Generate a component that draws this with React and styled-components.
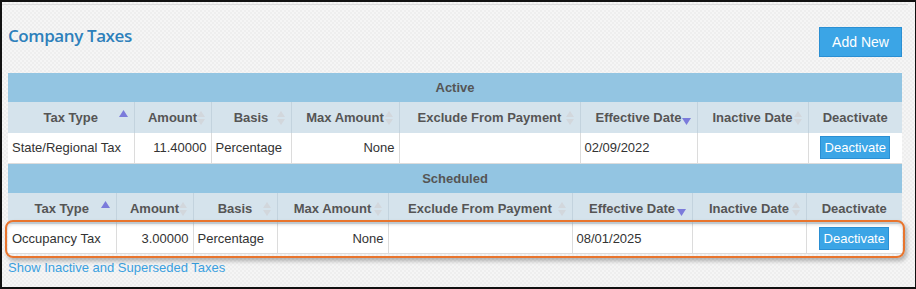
import styled, { createGlobalStyle } from 'styled-components';

const GlobalStyle = createGlobalStyle`
  html, body {
    margin: 0;
    padding: 0;
  }
  body {
    font-family: 'Liberation Sans', Arial, sans-serif;
  }
`;

const activeCols = [126, 77, 80, 108, 181, 117, 111, 94];
const scheduledCols = [108, 77, 84, 111, 184, 120, 114, 96];

const headers = [
  { label: 'Tax Type', sort: 'asc' },
  { label: 'Amount', sort: 'none' },
  { label: 'Basis', sort: 'none' },
  { label: 'Max Amount', sort: 'none' },
  { label: 'Exclude From Payment', sort: 'none' },
  { label: 'Effective Date', sort: 'desc' },
  { label: 'Inactive Date', sort: 'none' },
  { label: 'Deactivate', sort: null },
];

const activeRow = {
  type: 'State/Regional Tax',
  amount: '11.40000',
  basis: 'Percentage',
  max: 'None',
  exclude: '',
  effective: '02/09/2022',
  inactive: '',
};

const scheduledRow = {
  type: 'Occupancy Tax',
  amount: '3.00000',
  basis: 'Percentage',
  max: 'None',
  exclude: '',
  effective: '08/01/2025',
  inactive: '',
};

function SortMark({ sort }) {
  if (!sort) return null;
  if (sort === 'asc') {
    return (
      <SortIcon $top='8px'>
        <svg width='9' height='7' viewBox='0 0 9 7'>
          <polygon points='4.5,0 9,7 0,7' fill='#7b7bdb' />
        </svg>
      </SortIcon>
    );
  }
  if (sort === 'desc') {
    return (
      <SortIcon $top='16px'>
        <svg width='9' height='7' viewBox='0 0 9 7'>
          <polygon points='0,0 9,0 4.5,7' fill='#7b7bdb' />
        </svg>
      </SortIcon>
    );
  }
  return (
    <SortIcon $top='9px'>
      <svg width='8' height='14' viewBox='0 0 8 14'>
        <polygon points='4,0 8,6 0,6' fill='#d2d7dc' />
        <polygon points='0,8 8,8 4,14' fill='#d2d7dc' />
      </svg>
    </SortIcon>
  );
}

function TaxTable({ title, cols, row }) {
  return (
    <Table>
      <colgroup>
        {cols.map((w, i) => (
          <col key={i} style={{ width: w }} />
        ))}
      </colgroup>
      <thead>
        <GroupRow>
          <GroupCell colSpan={8}>{title}</GroupCell>
        </GroupRow>
        <HeadRow>
          {headers.map((h) => (
            <HeadCell key={h.label}>
              {h.label}
              <SortMark sort={h.sort} />
            </HeadCell>
          ))}
        </HeadRow>
      </thead>
      <tbody>
        <DataRow>
          <DataCell>{row.type}</DataCell>
          <DataCell $align='right'>{row.amount}</DataCell>
          <DataCell>{row.basis}</DataCell>
          <DataCell $align='right'>{row.max}</DataCell>
          <DataCell>{row.exclude}</DataCell>
          <DataCell>{row.effective}</DataCell>
          <DataCell>{row.inactive}</DataCell>
          <DataCell $align='center'>
            <SmallButton>Deactivate</SmallButton>
          </DataCell>
        </DataRow>
      </tbody>
    </Table>
  );
}

export default function App() {
  return (
    <>
      <GlobalStyle />
      <Frame>
        <TopRule />
        <Header>
          <Title>Company Taxes</Title>
          <AddButton>Add New</AddButton>
        </Header>
        <TaxTable title='Active' cols={activeCols} row={activeRow} />
        <Scheduled>
          <TaxTable title='Scheduled' cols={scheduledCols} row={scheduledRow} />
          <Highlight />
        </Scheduled>
        <ShowLink href='#'>Show Inactive and Superseded Taxes</ShowLink>
      </Frame>
    </>
  );
}

const Frame = styled.div`
  width: 916px;
  height: 289px;
  box-sizing: border-box;
  border: 2px solid #111;
  border-right-width: 1px;
  padding: 0 0 0 6px;
  background-color: #f2f2f2;
  background-image: repeating-conic-gradient(#eeeeee 0% 25%, #f5f5f5 0% 50%);
  background-size: 4px 4px;
  overflow: hidden;
`;

const TopRule = styled.div`
  height: 1px;
  margin: 2px 7px 0 -6px;
  background: #dcdcdc;
`;

const Header = styled.div`
  display: flex;
  justify-content: space-between;
  align-items: flex-start;
  width: 894px;
  height: 68px;
`;

const Title = styled.h1`
  margin: 19px 0 0 0;
  font-family: 'Open Sans', 'Liberation Sans', sans-serif;
  font-weight: 600;
  font-size: 17px;
  line-height: 24px;
  color: #2d80bb;
  letter-spacing: -0.4px;
`;

const AddButton = styled.button`
  margin-top: 22px;
  width: 83px;
  height: 30px;
  border: 1px solid #2a8fd3;
  background: #3ba5e6;
  color: #fff;
  font-family: 'Liberation Sans', Arial, sans-serif;
  font-size: 14px;
  padding: 0;
  cursor: pointer;
`;

const Table = styled.table`
  width: 894px;
  table-layout: fixed;
  border-collapse: collapse;
  font-family: 'Liberation Sans', Arial, sans-serif;
  font-size: 13px;
`;

const GroupRow = styled.tr`
  height: 29px;
`;

const HeadRow = styled.tr`
  height: 31px;
`;

const GroupCell = styled.th`
  padding: 0;
  background: #93c5e2;
  color: #555;
  font-weight: bold;
  font-size: 13px;
  text-align: center;
`;

const HeadCell = styled.th`
  position: relative;
  padding: 0 4px;
  background: #d5e3ec;
  border-left: 1px solid #c3d3de;
  color: #555;
  font-weight: bold;
  font-size: 13px;
  text-align: center;
  white-space: nowrap;
  &:first-child {
    border-left: none;
  }
`;

const SortIcon = styled.span`
  position: absolute;
  right: 6px;
  top: ${(props) => props.$top};
  line-height: 0;
`;

const DataRow = styled.tr`
  height: 30px;
  background: #fff;
  border-bottom: 1px solid #dcdcdc;
`;

const DataCell = styled.td`
  padding: 0 4px;
  border-left: 1px solid #dcdcdc;
  color: #333;
  text-align: ${(props) => props.$align || 'left'};
  white-space: nowrap;
  &:first-child {
    border-left: none;
  }
`;

const SmallButton = styled.button`
  width: 70px;
  height: 23px;
  padding: 0;
  border: 1px solid #2a8fd3;
  background: #3ba5e6;
  color: #fff;
  font-family: 'Liberation Sans', Arial, sans-serif;
  font-size: 13px;
  vertical-align: middle;
`;

const Scheduled = styled.div`
  position: relative;
  width: 894px;
`;

const Highlight = styled.div`
  position: absolute;
  left: -3px;
  right: -3px;
  bottom: -4px;
  height: 38px;
  box-sizing: border-box;
  border: 2px solid #e8742d;
  border-radius: 8px;
  box-shadow: 2px 3px 4px rgba(0, 0, 0, 0.28), inset 0 3px 3px rgba(0, 0, 0, 0.12);
  pointer-events: none;
`;

const ShowLink = styled.a`
  display: inline-block;
  margin-top: 6px;
  font-family: 'Liberation Sans', Arial, sans-serif;
  font-size: 13px;
  color: #3aa0e0;
  text-decoration: none;
`;
